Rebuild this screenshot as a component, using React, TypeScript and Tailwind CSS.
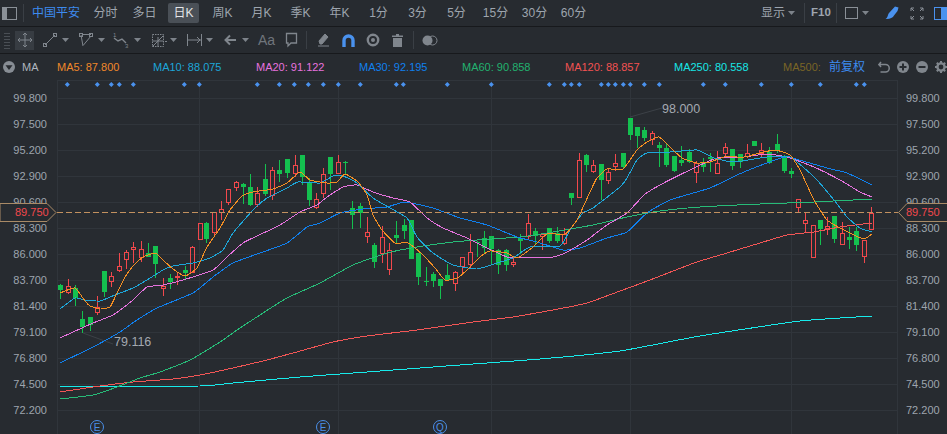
import React from "react";

type C = [number, number, number, number, number, 0 | 1];
const candles: C[] = [
[60.3,284,299,285,290,0],[67.7,279,294,286,292,1],[75.3,285,306,288,298,0],[82.3,311,333,319,327,0],[89.5,317,331,317,325,0],[97.4,296,315,307,312,1],[104.4,271,297,271,292,0],[111.3,272,287,276,281,1],[119.3,253,272,266,270,1],[126.3,250,269,252,259,1],[133.3,242,263,247,249,1],[140.7,241,262,249,257,1],[148.3,243,257,253,257,0],[155.3,246,278,246,264,0],[162.7,278,296,286,288,1],[170.3,274,289,278,282,0],[177.3,272,285,276,277,1],[184.7,266,280,270,273,0],[192.3,246,272,247,272,1],[199.7,223,239,223,239,1],[206.3,222,243,223,239,0],[214.3,212,236,212,232,1],[221.3,201,220,209,212,1],[228.3,189,205,189,202,1],[235.7,181,191,182,187,1],[243.3,183,204,184,187,0],[250.3,174,206,187,205,0],[257.3,187,207,193,204,1],[265.3,164,196,179,194,0],[272.3,167,200,170,195,1],[279.3,160,182,170,174,0],[287.3,159,178,159,173,0],[294.7,155,177,165,173,1],[301.7,155,185,155,177,0],[308.7,178,206,182,200,0],[316.3,193,209,199,207,1],
[323.3,168,198,174,193,1],[330.3,157,190,157,174,0],[338.3,155,173,162,173,1],[345.3,161,175,162,163,0],[352.3,201,229,208,215,0],[360.3,203,228,206,213,0],[367.3,217,243,232,236,1],[374.3,243,268,245,262,0],[382.3,226,263,237,253,1],[389.3,243,275,250,269,1],[396.3,221,243,235,238,0],[403.7,219,239,225,231,0],[411.3,220,259,220,259,0],[418.3,253,285,253,277,0],[425.7,267,286,281,282,0],[433.3,272,287,274,281,0],[440.3,279,299,279,286,0],[447.3,264,280,275,280,0],[455.3,271,291,272,283,1],[462.3,257,273,257,266,1],[469.7,234,268,252,264,1],[476.7,241,257,242,243,0],[484.3,231,254,238,248,0],[491.3,236,265,236,249,0],[498.3,249,274,250,265,0],[506.3,249,271,250,265,0],[513.3,258,267,262,264,1],[520.3,234,254,238,241,0],[528.3,214,239,223,236,1],[535.3,228,245,231,236,0],[542.3,234,250,234,236,1],[549.3,228,243,228,241,0],[557.3,227,243,233,241,0],[564.3,228,245,234,243,1],[571.3,193,205,193,198,0],[579.3,153,197,160,197,1],[586.3,154,172,155,165,0],[593.3,160,173,165,171,1],[601.3,164,200,164,180,0],[608.3,168,184,172,180,1],[615.3,154,171,163,166,1],[623.3,153,169,153,167,0],
[630.3,118,140,118,135,0],[637.3,127,148,127,136,0],[644.3,127,141,130,138,0],[652.3,131,145,133,139,1],[659.3,142,167,145,148,0],[666.3,144,167,148,165,0],[674.3,156,172,156,171,0],[681.3,146,166,160,163,0],[688.7,149,163,152,162,0],[696.3,161,183,163,172,1],[703.3,158,172,163,167,0],[710.3,153,172,157,159,0],[717.3,151,173,163,173,1],[725.3,143,157,147,153,1],[732.3,149,170,149,166,0],[739.7,154,168,154,162,0],[747.3,144,158,153,156,1],[754.3,141,146,141,146,0],[761.3,143,157,150,153,1],[769.3,147,164,152,163,0],[776.7,134,153,144,151,0],[783.7,155,173,156,171,0],[791.3,168,178,171,174,0],[798.3,199,213,199,207,1],[805.3,213,232,220,223,1],[812.7,225,257,225,257,1],[820.3,220,245,220,229,0],[827.3,217,235,226,228,1],[834.3,216,243,216,239,0],[842.3,222,244,233,244,1],[849.3,227,249,237,240,0],[856.3,227,251,231,245,0],[864.3,240,263,240,256,1],[871.3,207,230,213,229,1],
];

type P = [number, number][];
const ma5: P = [[60,293],[75,288],[85,301],[90,306],[100,309],[110,307],[117,293],[125,277],[133,266],[143,257],[155,253],[163,260],[173,269],[185,276],[197,268],[207,247],[220,228],[230,210],[242,196],[253,192],[273,189],[287,183],[300,172],[310,180],[327,183],[337,182],[345,174],[358,182],[367,195],[373,215],[382,230],[395,243],[408,243],[423,255],[435,268],[445,280],[457,278],[467,270],[480,257],[490,251],[507,253],[517,258],[533,247],[547,234],[565,234],[577,220],[590,192],[597,178],[607,169],[623,169],[637,150],[647,142],[659,137],[670,147],[682,158],[697,163],[710,162],[724,157],[744,157],[760,153],[775,150],[790,155],[800,170],[814,200],[827,220],[840,228],[854,235],[864,239],[872,234]];
const ma10: P = [[60,309],[75,298],[85,300],[100,301],[115,295],[133,288],[147,280],[163,270],[173,266],[193,263],[210,258],[223,250],[233,233],[253,210],[267,198],[287,188],[298,182],[320,183],[333,176],[343,176],[357,183],[373,198],[390,208],[407,218],[417,237],[433,253],[453,265],[477,269],[497,263],[513,258],[530,247],[560,246],[570,230],[583,213],[593,208],[620,187],[627,178],[637,160],[647,153],[670,152],[697,150],[714,158],[734,162],[767,157],[790,157],[814,177],[834,200],[847,217],[860,228],[872,232]];
const ma20: P = [[60,338],[93,323],[113,315],[133,300],[147,287],[163,285],[183,280],[213,270],[227,257],[243,243],[257,236],[280,225],[300,212],[317,205],[327,197],[343,187],[357,185],[373,192],[393,198],[410,202],[427,218],[443,228],[467,238],[487,248],[507,257],[517,258],[553,257],[567,252],[587,240],[607,225],[627,213],[644,195],[660,185],[694,168],[717,158],[744,157],[767,154],[787,157],[814,167],[840,180],[860,192],[872,197]];
const ma30: P = [[60,363],[93,347],[120,332],[137,320],[157,308],[193,293],[213,277],[233,263],[260,253],[287,243],[307,227],[320,223],[340,213],[363,209],[387,207],[405,202],[433,208],[460,218],[487,225],[517,237],[537,242],[563,250],[580,248],[607,238],[627,232],[647,213],[670,200],[710,188],[737,175],[767,163],[787,157],[827,168],[847,173],[872,185]];
const ma60: P = [[60,399],[93,395],[117,387],[140,378],[160,372],[190,360],[220,342],[237,330],[263,313],[287,298],[320,283],[353,265],[387,253],[417,247],[453,242],[477,240],[520,237],[553,232],[593,225],[627,217],[660,211],[700,207],[760,204],[814,202],[872,199]];
const ma120: P = [[60,392],[93,387],[133,382],[173,379],[200,375],[233,368],[267,360],[293,353],[333,342],[367,336],[417,330],[473,322],[513,317],[553,310],[587,303],[620,291],[650,280],[694,263],[727,253],[760,243],[787,235],[814,232],[840,227],[872,223]];
const ma250: P = [[60,387],[200,386],[233,383],[300,377],[367,372],[473,364],[540,359],[620,351],[700,336],[800,321],[872,316]];

function smooth(p: P) {
  let d = `M${p[0][0]} ${p[0][1]}`;
  for (let i = 0; i < p.length - 1; i++) {
    const a = p[Math.max(0, i - 1)], b = p[i], c = p[i + 1], e = p[Math.min(p.length - 1, i + 2)];
    const k = 0.08;
    d += ` C${(b[0] + (c[0] - a[0]) * k).toFixed(1)} ${(b[1] + (c[1] - a[1]) * k).toFixed(1)} ${(c[0] - (e[0] - b[0]) * k).toFixed(1)} ${(c[1] - (e[1] - b[1]) * k).toFixed(1)} ${c[0]} ${c[1]}`;
  }
  return d;
}

const diamonds = [67.3,97.3,111.3,119.3,133.3,184.3,199.3,257.3,279.3,294.3,308.3,323.3,338.3,360.3,396.3,403.3,447.3,491.3,549.3,564.3,571.3,579.3,601.3,608.3,615.3,623.3,630.3,644.3,659.3,703.3,725.3,761.3,791.3,820.3,856.3,864.3];
const prices = ["99.800","97.500","95.200","92.900","90.600","88.300","86.000","83.700","81.400","79.100","76.800","74.500","72.200"];
const hGrid = [98,124,150,176,202,228,254,280,306,332,358,384,410];
const vGrid = [199,338,491,630,791];

const Caret = () => (
  <svg width="7" height="4" viewBox="0 0 7 4" className="block shrink-0"><path d="M0 0H7L3.5 4Z" fill="#7d838a" /></svg>
);

const Ic = ({ w = 16, children }: { w?: number; children: React.ReactNode }) => (
  <svg width={w} height="16" viewBox={`0 0 ${w} 16`} fill="none" stroke="#80868d" strokeWidth="1" className="block shrink-0">{children}</svg>
);

const periods = ["分时","多日","日K","周K","月K","季K","年K","1分","3分","5分","15分","30分","60分"];
const legend: [string, string, string][] = [
  ["MA5: 87.800","#f0882a","w-[96px]"],
  ["MA10: 88.075","#1da6d9","w-[103px]"],
  ["MA20: 91.122","#e772df","w-[103px]"],
  ["MA30: 92.195","#1080ee","w-[103px]"],
  ["MA60: 90.858","#22b26f","w-[103px]"],
  ["MA120: 88.857","#f35252","w-[109px]"],
  ["MA250: 80.558","#17e6e6","w-[109px]"],
  ["MA500:","#7a6526","w-[46px]"],
];

function Chart() {
  return (
    <svg width="841" height="354" viewBox="57 80 841 354" className="block shrink-0">
      <g stroke="#30353b" strokeWidth="1" shapeRendering="crispEdges">
        <path d="M57 80.5H898" />
        {hGrid.map((y) => <path key={y} d={`M57 ${y + 0.5}H898`} />)}
        {vGrid.map((x) => <path key={x} d={`M${x + 0.5} 80V434`} />)}
        <path d="M57.5 80V434M897.5 80V434" />
      </g>
      {diamonds.map((x) => (
        <path key={x} d={`M${x} 82L${x + 2.5} 84.5L${x} 87L${x - 2.5} 84.5Z`} fill="#4a92ee" />
      ))}
      <path d="M630 117L662 108" stroke="#3c4147" />
      <path d="M83 333L113 344" stroke="#3c4147" />
      <g shapeRendering="crispEdges">
        {candles.map(([x, h, l, t, b, r], i) => {
          const cx = Math.round(x);
          if (r) {
            return (
              <g key={i} stroke="#f2484c" fill="none">
                <path d={`M${cx + 0.5} ${h}V${t}M${cx + 0.5} ${b}V${l}`} />
                <rect x={cx - 1.5} y={t + 0.5} width="4" height={Math.max(1, b - t)} />
              </g>
            );
          }
          return (
            <g key={i}>
              <path d={`M${cx + 0.5} ${h}V${l}`} stroke="#14c04f" />
              <rect x={cx - 2} y={t} width="5" height={Math.max(1, b - t)} fill="#14c04f" />
            </g>
          );
        })}
      </g>
      <g fill="none" strokeWidth="1" shapeRendering="crispEdges">
        <path d={smooth(ma250)} stroke="#17eaea" />
        <path d={smooth(ma120)} stroke="#f25656" />
        <path d={smooth(ma60)} stroke="#27bb78" />
        <path d={smooth(ma30)} stroke="#1080ee" />
        <path d={smooth(ma20)} stroke="#e572dd" />
        <path d={smooth(ma10)} stroke="#1da6d9" />
        <path d={smooth(ma5)} stroke="#f58f22" />
      </g>
      <path d="M57 212.5H898" stroke="#c2915f" strokeDasharray="6 3" shapeRendering="crispEdges" />
      <text x="662" y="113" fontSize="12.5" fill="#a4a9b0">98.000</text>
      <text x="114" y="346" fontSize="12.5" fill="#a4a9b0">79.116</text>
      {([[97,"E"],[323,"E"],[440,"Q"]] as [number,string][]).map(([x, t]) => (
        <g key={x}>
          <circle cx={x} cy="427" r="6.5" fill="none" stroke="#4a8fe8" />
          <text x={x} y="431" fontSize="10" textAnchor="middle" fill="#4a8fe8">{t}</text>
        </g>
      ))}
    </svg>
  );
}

const Axis = ({ className }: { className: string }) => (
  <div className={`flex flex-col pt-[5px] shrink-0 text-[11px] text-[#9ea5ae] ${className}`}>
    {prices.map((p) => <div key={p} className="h-[26px] leading-[26px]">{p}</div>)}
  </div>
);

export default function App() {
  return (
    <div className="w-[947px] h-[434px] overflow-hidden bg-[#272b30] flex flex-col text-[#9ea5ae] font-['Liberation_Sans','Noto_Sans_CJK_SC',sans-serif]">
      <div className="h-[27px] shrink-0 border-b border-[#17191c] flex items-center text-[12px] whitespace-nowrap">
        <svg width="15" height="13" viewBox="0 0 15 13" fill="none" className="ml-[2px] shrink-0">
          <rect x="0.5" y="0.5" width="14" height="12" stroke="#8a9097" />
          <rect x="1" y="1" width="4" height="11" fill="#8a9097" />
        </svg>
        <div className="w-px h-[18px] bg-[#3a3f45] ml-[6px] shrink-0" />
        <span className="ml-[8px] w-[54px] shrink-0 text-[#3d8bf0]">中国平安</span>
        {periods.map((p) => (
          <div key={p} className="w-[39px] flex justify-center shrink-0">
            <span className={p === "日K" ? "w-[31px] h-[20px] leading-[20px] text-center rounded-[2px] bg-[#4a5057] text-[#e4e6e8]" : ""}>{p}</span>
          </div>
        ))}
        <span className="ml-[168px] shrink-0">显示</span>
        <span className="ml-[3px]"><Caret /></span>
        <div className="w-px h-[20px] bg-[#3a3f45] ml-[9px] shrink-0" />
        <span className="ml-[6px] font-bold text-[11.5px] w-[20px] shrink-0">F10</span>
        <div className="w-px h-[20px] bg-[#3a3f45] ml-[5px] shrink-0" />
        <div className="ml-[8px] w-[13px] h-[12px] border border-[#8a9097] shrink-0" />
        <span className="ml-[4px]"><Caret /></span>
        <svg width="14" height="14" viewBox="0 0 14 14" className="ml-[16px] shrink-0">
          <path d="M10 0.5L13.5 1.5L12.5 5L9 9.5C8 12 4 13.5 0.5 13C3 11.5 2.5 9 4 7Z" fill="#4a92ee" />
        </svg>
        <svg width="14" height="13" viewBox="0 0 14 13" fill="none" stroke="#8a9097" className="ml-[11px] shrink-0">
          <path d="M1 4V1H4M10 1H13V4M1 9V12H4M10 12H13V9M1 1L4 4M13 1L10 4M1 12L4 9M13 12L10 9" />
        </svg>
        <div className="ml-[10px] w-[14px] h-[13px] border border-[#4a92ee] shrink-0 flex justify-end">
          <div className="w-[6px] bg-[#4a92ee]" />
        </div>
      </div>
      <div className="h-[27px] shrink-0 border-b border-[#17191c] flex items-center">
        <svg width="6" height="17" viewBox="0 0 6 17" className="ml-[4px] shrink-0" stroke="#4a4f55">
          <path d="M0 1.5H6M0 4.5H6M0 7.5H6M0 10.5H6M0 13.5H6M0 16.5H6" />
        </svg>
        <div className="ml-[5px] w-[19px] h-[19px] bg-[#373c42] flex items-center justify-center shrink-0">
          <Ic w={16}><path d="M8 1V15M1 8H15M6 3L8 1L10 3M6 13L8 15L10 13M3 6L1 8L3 10M13 6L15 8L13 10" /></Ic>
        </div>
        <span className="ml-[9px]"><Ic w={14}><path d="M2 13L12 3" /><rect x="0.5" y="11.5" width="3" height="3" /><rect x="10.5" y="1.5" width="3" height="3" /></Ic></span>
        <span className="ml-[5px]"><Caret /></span>
        <span className="ml-[10px]"><Ic w={14}><path d="M2 3L4 14M3 2.5H12M12 4L4.5 13" /><rect x="0.5" y="1.5" width="3" height="3" /><rect x="10.5" y="1.5" width="3" height="3" /></Ic></span>
        <span className="ml-[5px]"><Caret /></span>
        <span className="ml-[8px]">
          <svg width="16" height="16" viewBox="0 0 16 16" fill="none" stroke="#80868d" className="block">
            <path d="M1 6L5 9L9 7L13 11" strokeWidth="1.4" />
            <text x="0" y="5" fontSize="6" fill="#80868d" stroke="none">1</text>
            <text x="12" y="16" fontSize="6" fill="#80868d" stroke="none">3</text>
          </svg>
        </span>
        <span className="ml-[5px]"><Caret /></span>
        <span className="ml-[10px]"><Ic w={16}><rect x="1.5" y="2.5" width="11" height="12" strokeDasharray="1.5 1" /><path d="M1.5 14.5L12.5 3.5M1.5 9H12.5M7 5V14.5" /><path d="M14 9.5H16" /></Ic></span>
        <span className="ml-[3px]"><Caret /></span>
        <span className="ml-[10px]"><Ic w={15}><path d="M0.5 2V14M14.5 2V14M1 8H14M10 5L13 8L10 11" /></Ic></span>
        <span className="ml-[4px]"><Caret /></span>
        <span className="ml-[11px]"><Ic w={12}><path d="M12 8H2M6 3.5L1.5 8L6 12.5" strokeWidth="2" /></Ic></span>
        <span className="ml-[6px]"><Caret /></span>
        <span className="ml-[9px] w-[16px] text-[14px] leading-none text-[#6f757c]">Aa</span>
        <span className="ml-[11px]"><Ic w={13}><path d="M1.5 1.5H11.5V11H6L3 14V11H1.5Z" strokeWidth="1.3" /></Ic></span>
        <div className="w-px h-[18px] bg-[#3a3f45] ml-[8px] shrink-0" />
        <span className="ml-[10px]"><Ic w={12}><path d="M1 14H12" /><path d="M2 9L8 2L11 5L5 12H3Z" fill="#80868d" /></Ic></span>
        <svg width="13" height="13" viewBox="0 0 13 13" fill="none" className="ml-[13px] shrink-0">
          <path d="M2 13V6.5A4.5 4.5 0 0 1 11 6.5V13" stroke="#4a92ee" strokeWidth="3.4" />
        </svg>
        <svg width="14" height="14" viewBox="0 0 14 14" fill="none" className="ml-[11px] shrink-0">
          <circle cx="7" cy="7" r="5.2" stroke="#80868d" strokeWidth="2.4" />
          <circle cx="7" cy="7" r="2" fill="#80868d" />
        </svg>
        <svg width="11" height="13" viewBox="0 0 11 13" className="ml-[12px] shrink-0">
          <path d="M4 0H7V1.5H11V3H0V1.5H4ZM1 4H10V13H1Z" fill="#80868d" />
        </svg>
        <div className="w-px h-[18px] bg-[#3a3f45] ml-[10px] shrink-0" />
        <svg width="16" height="11" viewBox="0 0 16 11" fill="none" className="ml-[8px] shrink-0">
          <circle cx="5.5" cy="5.5" r="5" fill="#80868d" />
          <circle cx="10.5" cy="5.5" r="4.5" stroke="#80868d" />
        </svg>
      </div>
      <div className="h-[26px] shrink-0 flex items-center text-[11px] whitespace-nowrap">
        <svg width="12" height="12" viewBox="0 0 12 12" className="ml-[3px] shrink-0">
          <circle cx="6" cy="6" r="6" fill="#878d94" />
          <path d="M2.5 4.2H9.5L6 9Z" fill="#272b30" />
        </svg>
        <span className="ml-[7px] w-[35px] shrink-0 text-[#aeb5be]">MA</span>
        {legend.map(([t, c, w]) => (
          <span key={t} className={`shrink-0 ${w}`} style={{ color: c }}>{t}</span>
        ))}
        <span className="text-[12px] text-[#3d8bf0] w-[49px] shrink-0">前复权</span>
        <svg width="12" height="12" viewBox="0 0 12 12" fill="none" stroke="#80868d" strokeWidth="1.5" className="shrink-0">
          <path d="M3 1L1 3.5H7.5A3.7 3.7 0 0 1 7.5 11H2.5M1 3.5L3 6" />
        </svg>
        <svg width="12" height="12" viewBox="0 0 12 12" className="ml-[7px] shrink-0">
          <circle cx="6" cy="6" r="6" fill="#80868d" />
          <path d="M2.5 6H9.5M6 2.5V9.5" stroke="#272b30" strokeWidth="2" />
        </svg>
        <svg width="12" height="12" viewBox="0 0 12 12" className="ml-[7px] shrink-0">
          <circle cx="6" cy="6" r="6" fill="#80868d" />
          <path d="M2.5 6H9.5" stroke="#272b30" strokeWidth="2" />
        </svg>
        <svg width="12" height="12" viewBox="0 0 12 12" className="ml-[7px] shrink-0">
          <circle cx="6" cy="6" r="3.6" fill="none" stroke="#80868d" strokeWidth="2.4" />
          <path d="M6 0V2.5M6 9.5V12M0 6H2.5M9.5 6H12M1.8 1.8L3.5 3.5M8.5 8.5L10.2 10.2M10.2 1.8L8.5 3.5M3.5 8.5L1.8 10.2" stroke="#80868d" strokeWidth="2" />
        </svg>
      </div>
      <div className="relative flex-1 flex min-h-0">
        <Axis className="w-[57px] pr-[10px] text-right" />
        <Chart />
        <Axis className="w-[49px] pl-[8px]" />
        <div className="absolute left-0 top-[123px] w-[57px] h-[19px]">
          <svg width="57" height="19" viewBox="0 0 57 19" className="absolute inset-0">
            <path d="M0 0.5H47L56 9.5L47 18.5H0Z" fill="#272b30" stroke="#a98a66" />
          </svg>
          <span className="absolute left-[15px] top-0 leading-[19px] text-[11px] text-[#f2484c]">89.750</span>
        </div>
        <div className="absolute left-[898px] top-[123px] w-[49px] h-[19px]">
          <svg width="49" height="19" viewBox="0 0 49 19" className="absolute inset-0">
            <path d="M49 0.5H9L0.5 9.5L9 18.5H49" fill="#272b30" stroke="#a98a66" />
          </svg>
          <span className="absolute left-[8px] top-0 leading-[19px] text-[11px] text-[#f2484c]">89.750</span>
        </div>
      </div>
    </div>
  );
}
